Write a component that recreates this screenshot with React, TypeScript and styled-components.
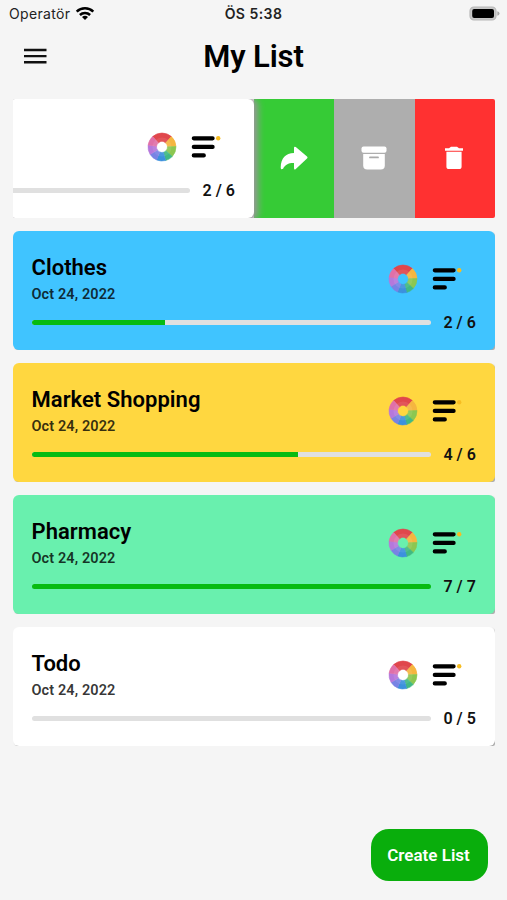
import React from "react";
import styled, { createGlobalStyle } from "styled-components";

const GlobalStyle = createGlobalStyle`
  * { box-sizing: border-box; }
  body { margin: 0; background: #f5f5f5; font-family: Roboto, sans-serif; color: #000; }
  button { font: inherit; border: 0; padding: 0; margin: 0; background: none; display: flex; }
  svg { display: block; flex: none; }
`;

const Screen = styled.main`
  width: 507px;
  height: 900px;
  display: flex;
  flex-direction: column;
  overflow: hidden;
  background: #f5f5f5;
`;

const StatusBar = styled.div`
  height: 27px;
  padding: 0 7px 0 9px;
  display: flex;
  justify-content: space-between;
  align-items: center;
  font-family: Inter, sans-serif;
  font-size: 14px;
  line-height: 27px;
  color: #222;
`;

const Carrier = styled.div`
  flex: 1;
  display: flex;
  align-items: center;
  gap: 5px;
  letter-spacing: 0.35px;
`;

const Clock = styled.div`
  flex: none;
  font-weight: 600;
  letter-spacing: 0.45px;
  padding-right: 2px;
`;

const BatterySlot = styled.div`
  flex: 1;
  display: flex;
  justify-content: flex-end;
`;

const Header = styled.header`
  height: 71.5px;
  padding: 0 24px;
  display: grid;
  grid-template-columns: 1fr auto 1fr;
  align-items: start;
`;

const MenuButton = styled.button`
  && {
    padding-top: 21px;
  }
`;

const Title = styled.h1`
  margin: 10.5px 0 0;
  font-size: 31px;
  line-height: 38px;
  font-weight: 600;
  letter-spacing: -0.15px;
`;

const Lists = styled.section`
  padding: 0 12px 0 13px;
  display: flex;
  flex-direction: column;
  gap: 12.5px;
`;

const SwipeRow = styled.div`
  display: flex;
  justify-content: flex-end;
  height: 119.5px;
  overflow: hidden;
  border-radius: 2px;
`;

const Card = styled.article<{ $color: string; $swiped?: boolean }>`
  flex: none;
  width: 482px;
  height: 119.5px;
  padding: 24px 0 0 18.5px;
  border-radius: 6px;
  background: ${(p) => p.$color};
  z-index: 1;
  box-shadow: ${(p) =>
    p.$swiped ? "2px 1px 7px 2px rgb(155,150,155)" : "2px 2px 2px rgba(0,0,0,.3)"};
`;

const CardTop = styled.div`
  display: flex;
  justify-content: space-between;
  height: 57px;
  padding-right: 33px;
`;

const CardName = styled.h2`
  margin: 0;
  font-size: 22px;
  line-height: 26px;
  font-weight: 600;
  letter-spacing: 0.03px;
`;

const CardDate = styled.div`
  margin-top: 5.5px;
  font-size: 14.5px;
  line-height: 18px;
  font-weight: 600;
  letter-spacing: 0.1px;
  color: rgba(0, 0, 0, 0.8);
`;

const CardIcons = styled.div`
  display: flex;
  align-items: flex-start;
  gap: 14px;
  padding-top: 9px;
`;

const ProgressRow = styled.div`
  display: flex;
  align-items: center;
  gap: 12.5px;
  height: 22px;
`;

const Track = styled.div`
  flex: none;
  width: 399.5px;
  height: 5px;
  border-radius: 3px;
  overflow: hidden;
  background: #e0e0e0;
`;

const Fill = styled.div`
  height: 100%;
  background: #07bb12;
`;

const Count = styled.div`
  font-size: 16px;
  font-weight: 600;
  letter-spacing: 0;
  white-space: nowrap;
  color: #111;
`;

const Action = styled.button<{ $color: string }>`
  && {
    flex: none;
    width: 80.3px;
    align-items: center;
    justify-content: center;
    padding-right: 1px;
    background: ${(p) => p.$color};
  }
`;

const Footer = styled.footer`
  margin-top: auto;
  padding: 0 19px 19.5px;
  display: flex;
  justify-content: flex-end;
`;

const CreateButton = styled.button`
  && {
    width: 117px;
    height: 51.5px;
    align-items: center;
    justify-content: center;
    border-radius: 18px;
    background: #09ae0c;
    color: #fff;
    font-size: 17px;
    font-weight: 600;
    padding-right: 2px;
  }
`;

const wheelColors = ["#e0474c", "#f5b640", "#8cc751", "#41b983", "#3c91dd", "#7883e4", "#b578dc", "#e070a8"];

const polar = (r: number, deg: number) => {
  const a = ((deg - 90) * Math.PI) / 180;
  return `${(15 + r * Math.cos(a)).toFixed(2)} ${(15 + r * Math.sin(a)).toFixed(2)}`;
};

const sector = (inner: number, outer: number, from: number, to: number) =>
  `M${polar(outer, from)}A${outer} ${outer} 0 0 1 ${polar(outer, to)}L${polar(inner, to)}A${inner} ${inner} 0 0 0 ${polar(inner, from)}Z`;

const wheelAngles = [-42, 42, 88, 133, 165, 203, 238, 278, 318];

const ColorWheel = () => (
  <svg width="30" height="30" viewBox="0 0 30 30">
    {wheelColors.map((c, i) => (
      <path
        key={c}
        d={sector(5.5, 14, wheelAngles[i], wheelAngles[i + 1])}
        fill={c}
        stroke={c}
        strokeWidth=".6"
      />
    ))}
    <circle cx="15" cy="15" r="7.4" fill="none" stroke="#fff" strokeWidth="4.4" opacity=".08" />
  </svg>
);

const SortIcon = () => (
  <svg width="30" height="30" viewBox="0 0 30 30">
    <g stroke="#000" strokeWidth="4.2" strokeLinecap="round">
      <path d="M2.8 6.3H21.6M2.8 14.9H21.6M2.8 23.4H12.8" />
    </g>
    <circle cx="27.2" cy="6.3" r="2.2" fill="#f7bd22" />
  </svg>
);

const WifiIcon = () => (
  <svg width="20" height="15" viewBox="0 0 20 15">
    <g fill="none" stroke="#000" strokeWidth="2.5">
      <path d="M1.7 5.6a11.9 11.9 0 0 1 16.6 0" />
      <path d="M4.9 9a7.3 7.3 0 0 1 10.2 0" />
    </g>
    <path d="M7 11.1a4.3 4.3 0 0 1 6 0L10 14.1Z" />
  </svg>
);

const BatteryIcon = () => (
  <svg width="31" height="15" viewBox="0 0 31 15">
    <rect x="1" y="1" width="26" height="13" rx="4" fill="#c8c8c8" stroke="#b8b8b8" strokeWidth="1.2" />
    <rect x="3.2" y="3" width="21.8" height="9" rx="2" />
    <path d="M28.3 5.2q2.2.5 2.2 2.3t-2.2 2.3Z" fill="#aaa" />
  </svg>
);

const MenuIcon = () => (
  <svg width="23" height="17" viewBox="0 0 23 17">
    <path d="M0 2H22.5M0 8.1H22.5M0 14.2H22.5" stroke="#111" strokeWidth="2.4" />
  </svg>
);

const ShareIcon = () => (
  <svg width="28" height="24" viewBox="0 0 28 24" fill="#fff">
    <path d="M14 2.1q0-2.3 1.8-1L27 10.6q1 1 0 2L15.8 22.9Q14 24.3 14 21.9V17.1C8.2 17 5.2 18.8 3.1 22.8Q.8 24.2.7 21.4C1 12 5.6 7.2 14 7Z" />
  </svg>
);

const ArchiveIcon = () => (
  <svg width="26" height="24" viewBox="0 0 26 24">
    <rect x=".5" y=".5" width="25" height="6.2" rx="2" fill="#fff" />
    <path d="M2.2 8H23.8V19.5a4 4 0 0 1-4 4H6.2a4 4 0 0 1-4-4Z" fill="#fff" />
    <path d="M9 11.4h8" stroke="#aaa" strokeWidth="1.8" strokeLinecap="round" />
  </svg>
);

const TrashIcon = () => (
  <svg width="18" height="24" viewBox="0 0 18 24" fill="#fff">
    <path d="M0 2.3H4L6 .8H12L14 2.3H18V4.7H0Z" />
    <path d="M1.4 5.7H16.6V20.5a2.6 2.6 0 0 1-2.6 2.6H4a2.6 2.6 0 0 1-2.6-2.6Z" />
  </svg>
);

interface ListItem {
  name: string;
  done: number;
  total: number;
  color: string;
  swiped?: boolean;
}

const items: ListItem[] = [
  { name: "", done: 2, total: 6, color: "#fff", swiped: true },
  { name: "Clothes", done: 2, total: 6, color: "#40c4ff" },
  { name: "Market Shopping", done: 4, total: 6, color: "#ffd740" },
  { name: "Pharmacy", done: 7, total: 7, color: "#69f0ae" },
  { name: "Todo", done: 0, total: 5, color: "#fff" },
];

const ListCard = ({ name, done, total, color, swiped }: ListItem) => (
  <Card $color={color} $swiped={swiped}>
    <CardTop>
      <div>
        {name && <CardName>{name}</CardName>}
        {name && <CardDate>Oct 24, 2022</CardDate>}
      </div>
      <CardIcons>
        <ColorWheel />
        <SortIcon />
      </CardIcons>
    </CardTop>
    <ProgressRow>
      <Track>
        <Fill style={{ width: `${(done / total) * 100}%` }} />
      </Track>
      <Count>{`${done} / ${total}`}</Count>
    </ProgressRow>
  </Card>
);

export default function App() {
  return (
    <>
      <GlobalStyle />
      <Screen>
        <StatusBar>
          <Carrier>
            Operatör
            <WifiIcon />
          </Carrier>
          <Clock>ÖS 5:38</Clock>
          <BatterySlot>
            <BatteryIcon />
          </BatterySlot>
        </StatusBar>
        <Header>
          <MenuButton aria-label="Menu">
            <MenuIcon />
          </MenuButton>
          <Title>My List</Title>
        </Header>
        <Lists>
          {items.map((item, i) => (
            <SwipeRow key={i}>
              <ListCard {...item} />
              {item.swiped && (
                <>
                  <Action $color="#36cb36" aria-label="Share">
                    <ShareIcon />
                  </Action>
                  <Action $color="#aeaeae" aria-label="Archive">
                    <ArchiveIcon />
                  </Action>
                  <Action $color="#ff3131" aria-label="Delete">
                    <TrashIcon />
                  </Action>
                </>
              )}
            </SwipeRow>
          ))}
        </Lists>
        <Footer>
          <CreateButton>Create List</CreateButton>
        </Footer>
      </Screen>
    </>
  );
}
